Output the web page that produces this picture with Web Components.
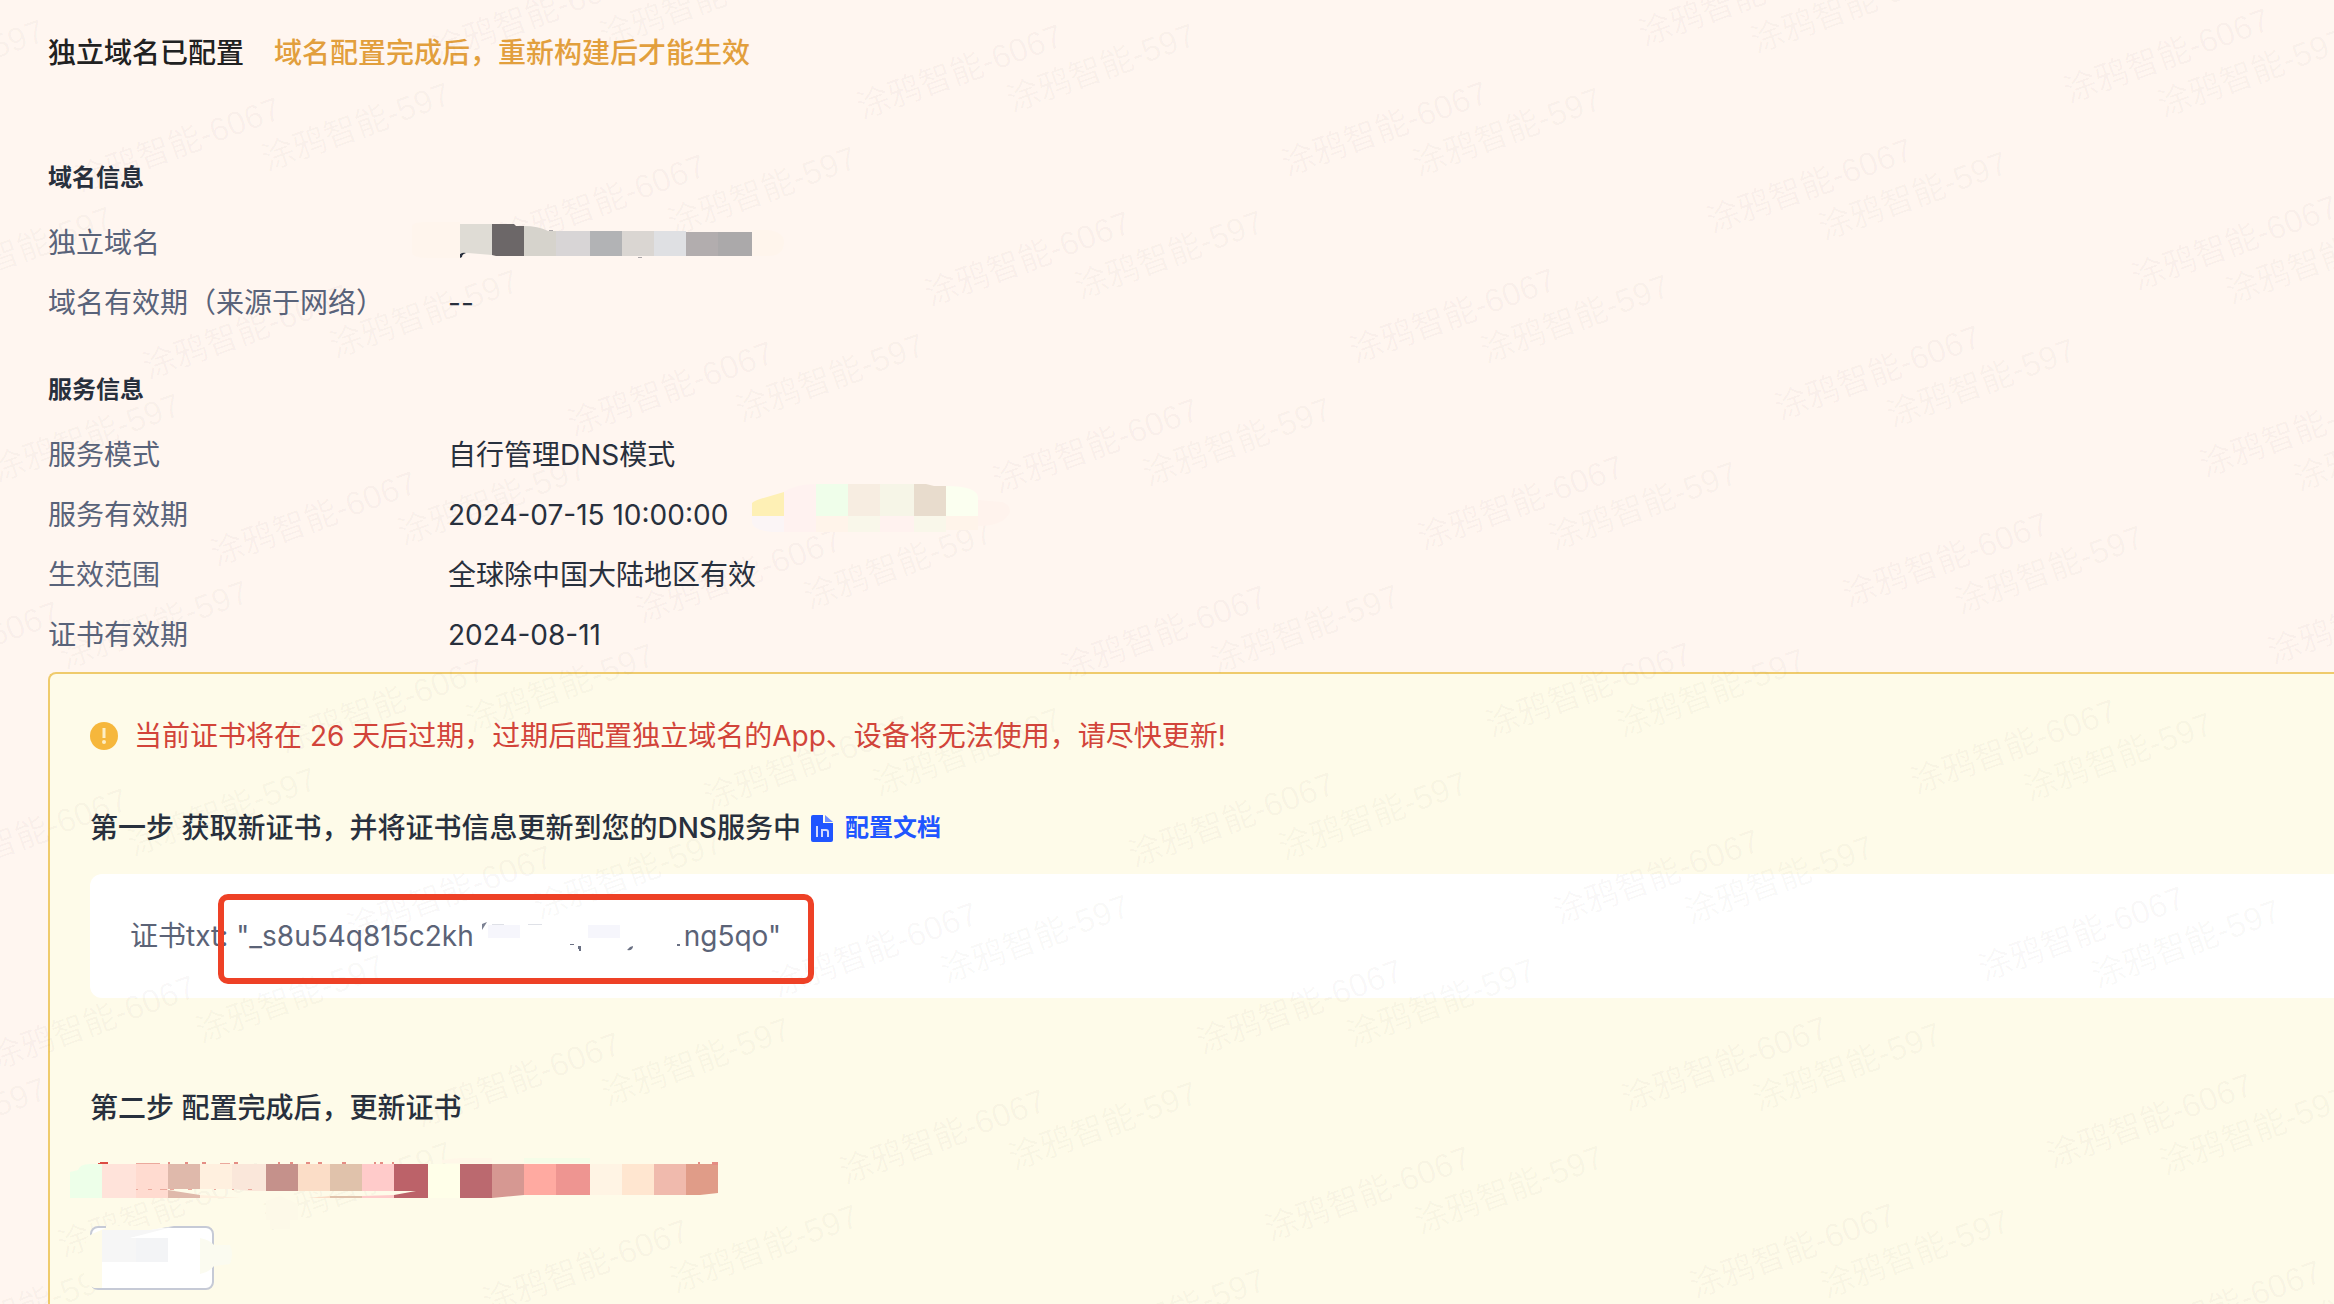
<!DOCTYPE html>
<html lang="zh-CN">
<head>
<meta charset="utf-8">
<title>独立域名已配置</title>
<style>
  html, body { margin: 0; height: 100%; }
  body {
    background: #fff6f0;
    color: #28303d;
    font: 28px/44px Inter, "Noto Sans CJK SC", sans-serif;
    overflow: hidden;
  }
</style>
</head>
<body>
<domain-page>
  <page-title slot="title">独立域名已配置<span slot="note">域名配置完成后，重新构建后才能生效</span></page-title>

  <info-section heading="域名信息">
    <info-row label="独立域名"><pixel-mosaic kind="domain"></pixel-mosaic></info-row>
    <info-row label="域名有效期（来源于网络）">--</info-row>
  </info-section>

  <info-section heading="服务信息">
    <info-row label="服务模式">自行管理DNS模式</info-row>
    <info-row label="服务有效期">2024-07-15 10:00:00<pixel-mosaic kind="period"></pixel-mosaic></info-row>
    <info-row label="生效范围">全球除中国大陆地区有效</info-row>
    <info-row label="证书有效期">2024-08-11</info-row>
  </info-section>

  <cert-panel slot="panel">
    <span slot="alert">当前证书将在 26 天后过期，过期后配置独立域名的App、设备将无法使用，请尽快更新!</span>
    <span slot="step-one">第一步 获取新证书，并将证书信息更新到您的DNS服务中</span>
    <doc-link slot="doc">配置文档</doc-link>
    <cert-record slot="record" label="证书txt:"><span slot="head">"_s8u54q815c2kh</span><span slot="tail">ng5qo"</span></cert-record>
    <span slot="step-two">第二步 配置完成后，更新证书</span>
    <pixel-mosaic slot="hint" kind="hint"></pixel-mosaic>
    <update-button slot="action"></update-button>
  </cert-panel>
</domain-page>

<script>
const define = (name, html, setup) => {
  const template = document.createElement('template');
  template.innerHTML = html;
  customElements.define(name, class extends HTMLElement {
    constructor() {
      super();
      this.attachShadow({ mode: 'open' }).append(template.content.cloneNode(true));
    }
    connectedCallback() { if (setup) setup(this, this.shadowRoot); }
  });
};

/* Repeating account marks laid over the whole page, two grids at the same slant. */
define('water-mark', `
  <style>
    :host { position: absolute; inset: 0; overflow: hidden; pointer-events: none; }
    svg { display: block; width: 100%; height: 100%; }
    text { font: 33px "Liberation Sans", "Noto Sans CJK SC", sans-serif; }
    .a { fill: rgba(70, 50, 60, .035); }
    .b { fill: rgba(70, 80, 60, .035); }
  </style>
  <svg aria-hidden="true"></svg>`,
  (host, root) => {
    const svg = root.querySelector('svg');
    const w = innerWidth, h = innerHeight;
    const grid = (cls, label, x0, y0, pitch) => {
      const g = document.createElementNS('http://www.w3.org/2000/svg', 'g');
      const rad = 20 * Math.PI / 180, c = Math.cos(rad), s = Math.sin(rad);
      for (let i = -9; i < 9; i++) for (let j = -9; j < 12; j++) {
        const x = Math.round(x0 + i * pitch * c + j * 199 * s);
        const y = Math.round(y0 - i * pitch * s + j * 199 * c);
        if (x < -190 || x > w - 10 || y < 15 || y > h + 60) continue;
        const t = document.createElementNS('http://www.w3.org/2000/svg', 'text');
        t.setAttribute('transform', `translate(${x} ${y}) rotate(-20)`);
        t.textContent = label;
        t.setAttribute('class', cls);
        g.append(t);
      }
      svg.append(g);
    };
    grid('a', '涂鸦智能-6067', 1287, 176, 380);
    grid('b', '涂鸦智能-597', 1418, 176, 360);
  });

/* Blocks of flat colour that cover private values. */
const mosaics = {
  domain: { w: 380, h: 60, body: `
    <path d="M-36 14Q-36 10-20 10H12V46H-20Q-36 46-36 40Z" fill="#fff5ed"/>
    <path d="M304 18H320Q336 20 336 30Q336 44 320 44H304Z" fill="#fff5ec"/>
    <path d="M12 12H44V43L20 41H12Z" fill="#dfdcd5"/>
    <path d="M44 12H66L68 14H76V44H48L44 43Z" fill="#6c6768"/>
    <path d="M76 14Q90 14 100 19H108V44H76Z" fill="#d6d3cc"/>
    <path d="M108 19H142V44H108Z" fill="#d8d5d6"/>
    <path d="M142 19H174V44H142Z" fill="#b2b3b5"/>
    <path d="M174 19H206V44H174Z" fill="#dad6d2"/>
    <path d="M206 19H238V44H206Z" fill="#dfe0e3"/>
    <path d="M238 20H270V44H238Z" fill="#b2adae"/>
    <path d="M270 20H304V44H270Z" fill="#aba9aa"/>
    <path d="M12 46V42Q15 40 18 41Q14 42 14 45Z" fill="#28303d"/>
    <path d="M101 18H105V19H101ZM190 45H194V46H190Z" fill="#aaa6a8"/>` },
  period: { w: 270, h: 60, body: `
    <path d="M12 32H44V48H32Q12 46 12 38Z" fill="#fbf5f6"/>
    <path d="M12 19Q14 17 20 15L44 8V32H12Z" fill="#fef0b5"/>
    <path d="M44 8Q56 0 76 0V48H44Z" fill="#fff2f0"/>
    <path d="M76 0H108V32H76Z" fill="#effeea"/><path d="M108 0H140V32H108Z" fill="#f7ede1"/>
    <path d="M140 0H174V32H140Z" fill="#f6f5e7"/><path d="M174 0H186L194 2H206V32H174Z" fill="#e8dccd"/>
    <path d="M206 2Q238 2 238 14V32H206Z" fill="#fbfff0"/>
    <path d="M76 32H108V48H76ZM206 32H238V46H206Z" fill="#fff4ea"/>
    <path d="M108 32H140V48H108ZM174 32H206V48H174Z" fill="#f9f7ea"/><path d="M140 32H174V48H140Z" fill="#fff2ef"/>
    <path d="M238 16L262 18Q270 20 270 28Q264 42 238 42Z" fill="#fff3ed"/>` },
  record: { w: 210, h: 44, body: `
    <path d="M8 10L13 8L8 16Z" fill="#7b8192"/>
    <path d="M14 11H46V24H14ZM114 11H146V24H114Z" fill="#f6f6fc"/>
    <path d="M18 10H30V11H18ZM54 10H68V11H54Z" fill="#dfe1e7"/>
    <path d="M96 30H100V31H96ZM104 32H107V37H105V35H104ZM156 33L159 32Q159 37 153 36Z" fill="#6a7083"/>
    <path d="M203 30H206V32H203Z" fill="#6a7083"/>` },
  hint: { w: 660, h: 110, body: `
    <path d="M0 34V8L8 6Q10 0 20 0H32V34Z" fill="#edffe9"/>
    <path d="M32 0H66V34H32Z" fill="#ffe3da"/><path d="M66 0H98V34H66Z" fill="#ffdbd0"/>
    <path d="M98 0H130V25H98ZM98 26L130 31V34H98Z" fill="#dfb9ab"/>
    <path d="M130 0H162V25H130ZM130 31L170 34H130Z" fill="#fff0df"/><path d="M162 0H196V27H180L162 25Z" fill="#fae7da"/>
    <path d="M196 0H228V27H196Z" fill="#c5918b"/><path d="M228 0H260V27H228ZM238 34L260 32V34Z" fill="#fbddc7"/>
    <path d="M260 0H292V27H260ZM260 32H292V34H260Z" fill="#e0c2ab"/>
    <path d="M292 0H324V27H292ZM292 32L324 31V34H292Z" fill="#ffcbca"/>
    <path d="M324 0H358V34H324V31L346 27H324Z" fill="#bc6269"/>
    <path d="M358 0H390V34H358Z" fill="#ffffe9"/><path d="M390 0H422V34H390Z" fill="#bb696f"/>
    <path d="M422 0H454V31L422 34Z" fill="#d69892"/><path d="M454 0H486V31H454Z" fill="#ffaaa1"/>
    <path d="M486 0H520V31H486Z" fill="#ee9591"/><path d="M520 0H552V31H520Z" fill="#fff4e4"/>
    <path d="M552 0H584V31H552Z" fill="#ffe6d0"/><path d="M584 0H616V31H584Z" fill="#f0baad"/>
    <path d="M616 0H648V29L630 31H616Z" fill="#e09c88"/>
    <path d="M454 -6H520V-1H454Z" fill="#f5fde8"/><path d="M390 -6H422V-1H372V-4Z" fill="#fff7e8"/>
    <path d="M30 -2H38V0H28V-1H30Z" fill="#dc4b43"/>
    <path d="M98 -2H100V0H98ZM115 -2H118V0H115ZM132 -2H136V0H132ZM164 -2H168V0H164ZM208 -2H210V0H208ZM220 -2H223V0H220ZM236 -2H240V0H236ZM248 -2H252V0H248ZM272 -2H276V0H272ZM304 -2H306V0H304ZM310 -2H313V0H310ZM322 -2H324V0H322ZM628 -2H630V0H628ZM642 -2H648V1H642Z" fill="#e58d84"/>
    <path d="M66 -1H90V0H66ZM150 -1H160V0H150ZM66 25H68V26H66ZM78 25H82V26H78ZM90 25H97V26H90ZM100 25H104V26H100ZM118 25H122V26H118ZM144 25H146V26H144ZM162 25H164V26H162ZM178 25H182V26H178Z" fill="#eba99d"/>
    <path d="M196 37L210 32L228 40V56H220V65H200V56H196Z" fill="#fdf9e8"/>` },
  action: { w: 160, h: 70, body: `
    <path d="M-4 12L2 8L16 2V0H84L60 4H12V62H4Q-6 58-6 48Z" fill="#fefbe9"/>
    <path d="M12 4H60L82 1L40 12H78V36H12Z" fill="#f6f6f6"/>
    <path d="M46 12H78V36H46Z" fill="#f3f4f6"/><path d="M40 12L84 2H96V12Z" fill="#fff"/>
    <path d="M110 12Q120 14 124 19H140Q144 28 140 38L124 40Q120 46 110 48Z" fill="#fbfbf0"/>` }
};
define('pixel-mosaic', `
  <style>
    :host { display: block; position: relative; z-index: 2; width: 0; height: 0; white-space: normal; }
    svg { display: block; overflow: visible; }
    :host([kind="domain"]) svg, :host([kind="period"]) svg { margin-top: -31px; }
    :host([kind="period"]) { margin-left: 12px; }
    :host([kind="record"]) { width: 210px; height: 44px; }
    :host([kind="hint"]) { height: 34px; margin-left: -20px; }
  </style>
  <svg aria-hidden="true"></svg>`,
  (host, root) => {
    const m = mosaics[host.getAttribute('kind')], svg = root.querySelector('svg');
    svg.setAttribute('width', m.w);
    svg.setAttribute('height', m.h);
    svg.innerHTML = m.body;
  });

define('page-title', `
  <style>
    :host { display: flex; gap: 30px; color: #212121; font-weight: 500; }
    h1 { margin: 0; font: inherit; }
    .note { color: #e29f3d; }
  </style>
  <h1><slot></slot></h1><div class="note"><slot name="note"></slot></div>`);

define('info-section', `
  <style>
    :host { display: block; }
    h2 { margin: 0 0 18px; font-size: 24px; line-height: 34px; font-weight: 600; }
  </style>
  <h2></h2><slot></slot>`,
  (host, root) => { root.querySelector('h2').textContent = host.getAttribute('heading'); });

define('info-row', `
  <style>
    :host { display: flex; align-items: center; height: 60px; }
    .label { flex: 0 0 400px; color: #59637a; }
    .value { display: flex; align-items: center; white-space: pre; }
  </style>
  <div class="label"></div><div class="value"><slot></slot></div>`,
  (host, root) => { root.querySelector('.label').textContent = host.getAttribute('label'); });

define('doc-link', `
  <style>
    :host { display: block; }
    a { display: flex; align-items: center; gap: 12px; color: #2055ff; font-size: 24px; font-weight: 600; text-decoration: none; }
  </style>
  <a href="#doc">
    <svg width="22" height="27" viewBox="0 0 22 27" aria-hidden="true">
      <path d="M2 0H12V8H22V25Q22 27 20 27H2Q0 27 0 25V2Q0 0 2 0Z" fill="#2055ff"/>
      <path d="M14 0L22 7H14Z" fill="#6f8eff"/>
      <path d="M6 11V22M11 14V22M11 15H15Q17 15 17 17V22" fill="none" stroke="#d3dafc" stroke-width="2"/>
    </svg>
    <slot></slot>
  </a>`);

define('cert-record', `
  <style>
    :host { display: flex; gap: 8px; padding: 40px; border-radius: 12px 0 0 12px; background: #fff; color: #5b6377; }
    .value { position: relative; display: flex; }
    .mark { position: absolute; inset: -20px -33px -26px -18px; border: 6px solid #ee4126; border-radius: 10px; z-index: 3; }
  </style>
  <span class="label"></span>
  <span class="value"><slot name="head"></slot><pixel-mosaic kind="record"></pixel-mosaic><slot name="tail"></slot><i class="mark"></i></span>`,
  (host, root) => { root.querySelector('.label').textContent = host.getAttribute('label'); });

define('update-button', `
  <style>
    :host { display: block; position: relative; z-index: 2; }
    button { display: block; width: 124px; height: 64px; padding: 0; border: 2px solid #c6cad6; border-radius: 8px; background: #fff; }
    pixel-mosaic { position: absolute; left: 0; top: 0; }
  </style>
  <button type="button" aria-label="更新"></button><pixel-mosaic kind="action"></pixel-mosaic>`);

define('cert-panel', `
  <style>
    :host { display: flex; flex-direction: column; padding: 40px 0 40px 40px; border: 2px solid #efcb6c; border-width: 2px 0 0 2px; border-radius: 8px 0 0 0; background: #fefbe9; }
    .alert { display: flex; align-items: center; gap: 16px; color: #d2443a; }
    .step { display: flex; align-items: center; gap: 10px; }
    h3 { margin: 0; font: inherit; font-weight: 500; }
    .one { margin: 48px 0 24px; }
    .two { margin: 88px 0 34px; }
    .action { margin-top: 28px; }
  </style>
  <div class="alert" role="alert">
    <svg width="28" height="28" viewBox="0 0 28 28" aria-hidden="true">
      <circle cx="14" cy="14" r="14" fill="#f6b73c"/>
      <path d="M14 6V16" stroke="#fdeec4" stroke-width="3"/><circle cx="14" cy="20" r="2" fill="#fdeec4"/>
    </svg>
    <slot name="alert"></slot>
  </div>
  <div class="step one"><h3><slot name="step-one"></slot></h3><slot name="doc"></slot></div>
  <slot name="record"></slot>
  <div class="step two"><h3><slot name="step-two"></slot></h3></div>
  <slot name="hint"></slot>
  <div class="action"><slot name="action"></slot></div>`);

define('domain-page', `
  <style>
    :host { position: relative; display: flex; flex-direction: column; box-sizing: border-box; height: 100vh; padding: 31px 0 0 48px; overflow: hidden; }
    .info { display: flex; flex-direction: column; gap: 40px; margin: 86px 0 7px; }
    .panel { display: flex; flex-direction: column; flex: 1 0 auto; }
    .panel ::slotted(*) { flex: 1; }
  </style>
  <slot name="title"></slot>
  <div class="info"><slot></slot></div>
  <div class="panel"><slot name="panel"></slot></div>
  <water-mark></water-mark>`);
</script>
</body>
</html>
